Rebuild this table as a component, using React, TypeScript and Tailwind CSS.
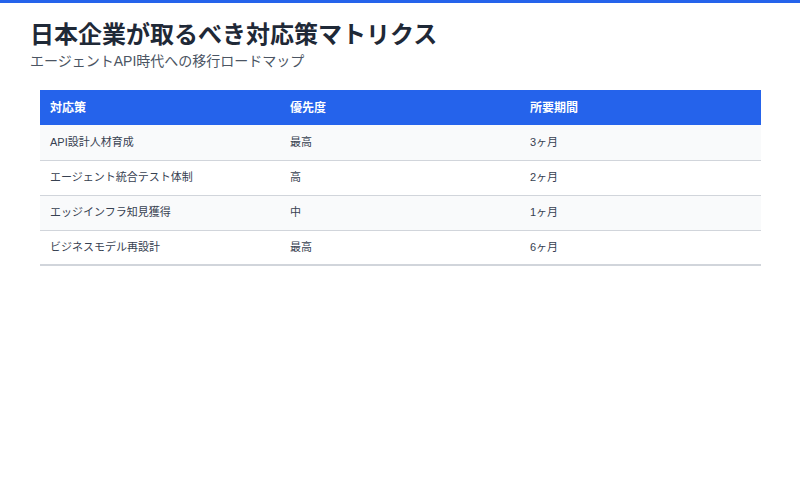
import React from 'react';

const rows = [
  { measure: 'API設計人材育成', priority: '最高', period: '3ヶ月' },
  { measure: 'エージェント統合テスト体制', priority: '高', period: '2ヶ月' },
  { measure: 'エッジインフラ知見獲得', priority: '中', period: '1ヶ月' },
  { measure: 'ビジネスモデル再設計', priority: '最高', period: '6ヶ月' },
];

const font = { fontFamily: '"Liberation Sans", "Noto Sans CJK JP", sans-serif' };

export default function App() {
  return (
    <div className="w-[800px] h-[500px] bg-white overflow-hidden" style={font}>
      <div className="h-[3px] bg-[#2563eb]" />
      <div className="px-[30px] pt-[14px]">
        <h1 className="text-[24px] leading-[36px] font-bold text-[#1f2937]">
          日本企業が取るべき対応策マトリクス
        </h1>
        <p className="text-[14px] leading-[16px] text-[#4b5563]">
          エージェントAPI時代への移行ロードマップ
        </p>
        <div className="mx-[10px] mt-[21px]">
          <table className="w-[721px] border-collapse border-b-2 border-[#d1d5db] text-left">
            <thead>
              <tr className="bg-[#2563eb] text-white">
                <th className="w-[240px] h-[35px] px-[10px] text-[12px] font-bold">対応策</th>
                <th className="w-[240px] h-[35px] px-[10px] text-[12px] font-bold">優先度</th>
                <th className="h-[35px] px-[10px] text-[12px] font-bold">所要期間</th>
              </tr>
            </thead>
            <tbody>
              {rows.map((row, i) => (
                <tr
                  key={row.measure}
                  className={`${i % 2 === 0 ? 'bg-[#f9fafb]' : 'bg-white'} border-t border-[#d1d5db] first:border-t-0`}
                >
                  <td className="h-[35px] px-[10px] text-[11px] text-[#374151]">{row.measure}</td>
                  <td className="h-[35px] px-[10px] text-[11px] text-[#374151]">{row.priority}</td>
                  <td className="h-[35px] px-[10px] text-[11px] text-[#374151]">{row.period}</td>
                </tr>
              ))}
            </tbody>
          </table>
        </div>
      </div>
    </div>
  );
}
